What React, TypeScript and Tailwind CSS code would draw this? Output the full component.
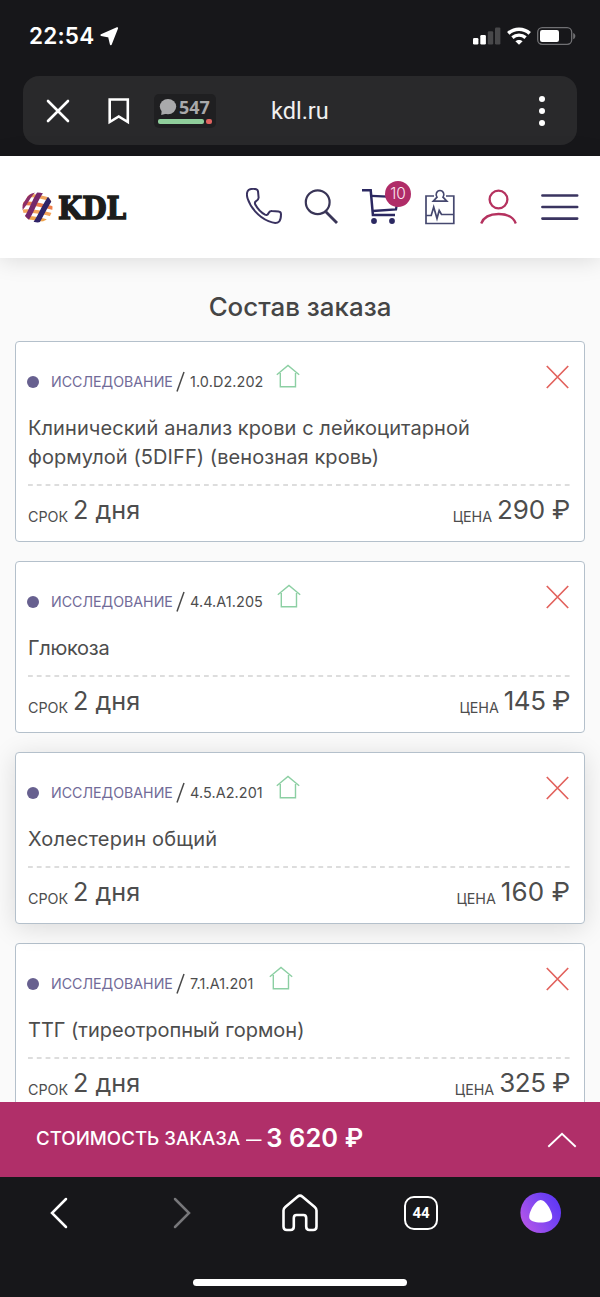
import React from "react";

type Study = {
  code: string;
  codeWidth: string;
  lines: string[];
  nameTracking: string;
  term: string;
  price: string;
  priceTracking: string;
  raised?: boolean;
};

const studies: Study[] = [
  {
    code: "1.0.D2.202",
    codeWidth: "w-[86px]",
    lines: ["Клинический анализ крови с лейкоцитарной", "формулой (5DIFF) (венозная кровь)"],
    nameTracking: "tracking-[0.08px]",
    term: "2 дня",
    price: "290 ₽",
    priceTracking: "tracking-[-0.2px]",
  },
  {
    code: "4.4.A1.205",
    codeWidth: "w-[87px]",
    lines: ["Глюкоза"],
    nameTracking: "tracking-[-0.3px]",
    term: "2 дня",
    price: "145 ₽",
    priceTracking: "tracking-[-0.5px]",
  },
  {
    code: "4.5.A2.201",
    codeWidth: "w-[86px]",
    lines: ["Холестерин общий"],
    nameTracking: "tracking-[0.2px]",
    term: "2 дня",
    price: "160 ₽",
    priceTracking: "tracking-[0.1px]",
    raised: true,
  },
  {
    code: "7.1.A1.201",
    codeWidth: "w-[79px]",
    lines: ["ТТГ (тиреотропный гормон)"],
    nameTracking: "tracking-[0px]",
    term: "2 дня",
    price: "325 ₽",
    priceTracking: "tracking-[-0.5px]",
  },
];

function StatusBar() {
  return (
    <div className="flex h-[76px] items-start justify-between pt-[23px] pr-[24px] pl-[29px] text-white">
      <div className="flex h-[26px] items-center">
        <span className="w-[66px] text-[22.5px] leading-[26px] font-semibold tracking-[0.2px] whitespace-nowrap">22:54</span>
        <svg width="19" height="19" viewBox="0 0 19 19" className="ml-[5px]">
          <path d="M17.2 1.2 1.3 8.1 9 9.7 10.8 17.3Z" fill="white" stroke="white" strokeWidth="1.8" strokeLinejoin="round" />
        </svg>
      </div>
      <div className="flex h-[26px] items-center">
        <svg width="28" height="18" viewBox="0 0 28 18">
          <rect x="0" y="11" width="5.4" height="6.5" rx="1.2" fill="white" />
          <rect x="7.3" y="8" width="5.6" height="9.5" rx="1.2" fill="white" />
          <rect x="14.8" y="4.2" width="5.4" height="13.3" rx="1.2" fill="#48484a" />
          <rect x="22" y="0.5" width="5.4" height="17" rx="1.2" fill="#48484a" />
        </svg>
        <svg width="24" height="18" viewBox="0 0 24 18" className="ml-[6px]" fill="none" stroke="white">
          <path d="M1.3 6.3C7.3.8 16.7.8 22.7 6.3" strokeWidth="3.6" />
          <path d="M5.4 10.6C9.2 7.3 14.8 7.3 18.6 10.6" strokeWidth="3.4" />
          <path d="M12 17.8 8.4 14.3C10.5 12.4 13.5 12.4 15.6 14.3Z" fill="white" stroke="none" />
        </svg>
        <svg width="39" height="18" viewBox="0 0 39 18" className="ml-[6px]">
          <rect x="0.7" y="0.7" width="34" height="16.6" rx="4.5" fill="none" stroke="#707073" strokeWidth="1.3" />
          <rect x="3" y="3" width="19" height="12" rx="2.2" fill="white" />
          <path d="M36.2 6V12.2C39 11.3 39 6.9 36.2 6Z" fill="#707073" />
        </svg>
      </div>
    </div>
  );
}

function AddressBar() {
  return (
    <div className="mx-[23px] flex h-[69px] items-center rounded-[16px] bg-[#29292b] text-white">
      <svg width="24" height="24" viewBox="0 0 24 24" className="ml-[23px]">
        <path d="M2 2 22 22M22 2 2 22" stroke="white" strokeWidth="2.6" strokeLinecap="round" />
      </svg>
      <svg width="22" height="28" viewBox="0 0 22 28" className="ml-[38px]">
        <path d="M1.7 2.5H19.8V25L10.75 19.5 1.7 25Z" fill="none" stroke="white" strokeWidth="2.6" />
      </svg>
      <div className="ml-[24px] flex h-[34px] w-[62px] flex-col rounded-[5px] bg-[#1f1f21] px-[4px] pt-[4px]">
        <div className="flex h-[19px] items-center">
          <svg width="18" height="18" viewBox="0 0 18 18" className="ml-[1px]">
            <ellipse cx="9" cy="8.6" rx="8.2" ry="7.7" fill="#a9a9ab" />
            <path d="M3 11 2.2 17 8 15.5Z" fill="#a9a9ab" />
          </svg>
          <span className="ml-[2px] font-['Noto_Sans',sans-serif] text-[18px] leading-[19px] font-bold text-[#a9a9ab]">547</span>
        </div>
        <div className="mt-[2px] flex gap-[2px]">
          <div className="h-[5px] w-[46px] rounded-[2px] bg-[#8fce9b]" />
          <div className="h-[5px] w-[6px] rounded-[2px] bg-[#e0635f]" />
        </div>
      </div>
      <span className="ml-[55px] w-[59px] font-['Roboto',sans-serif] text-[23.5px] leading-[28px] whitespace-nowrap text-[#f0f0f0]">kdl.ru</span>
      <div className="mr-[32px] ml-auto flex flex-col gap-[6px]">
        <div className="size-[6px] rounded-full bg-white" />
        <div className="size-[6px] rounded-full bg-white" />
        <div className="size-[6px] rounded-full bg-white" />
      </div>
    </div>
  );
}

function Logo() {
  return (
    <div className="flex h-[32px] items-center">
      <svg width="31" height="31" viewBox="0 0 31 31">
        <defs>
          <clipPath id="ball">
            <circle cx="15.5" cy="15.5" r="15" />
          </clipPath>
        </defs>
        <g clipPath="url(#ball)" fill="none">
          <path d="M-2 5C8 1 22 6 34 9" stroke="#f0a45d" strokeWidth="3.2" />
          <path d="M-2 12C8 10 20 13 34 17" stroke="#ef7d4a" strokeWidth="3.6" />
          <path d="M-2 19.5C8 18 20 20 34 24" stroke="#f4a45c" strokeWidth="3.6" />
          <path d="M-2 26C8 25 20 27 30 31" stroke="#f0a44c" strokeWidth="3.4" />
          <path d="M-1 17C4 12 6 5 12 -1" stroke="#8c2e68" strokeWidth="3.6" />
          <path d="M4 27C10 20 12 8 20 -2" stroke="#75276b" strokeWidth="5.4" />
          <path d="M12 34C19 25 22 14 30 4" stroke="#2f2367" strokeWidth="5.4" />
        </g>
      </svg>
      <span className="relative top-[1px] ml-[5px] w-[70px] origin-left scale-x-[0.86] font-['DejaVu_Serif',serif] text-[32.5px] leading-[32px] font-bold whitespace-nowrap text-[#1d1d1b] [-webkit-text-stroke:1.6px_#1d1d1b]">
        KDL
      </span>
    </div>
  );
}

function SiteHeader() {
  return (
    <header className="relative flex h-[102px] items-center bg-white pr-[21px] pl-[22px] shadow-[0_2px_22px_rgba(0,0,0,0.13)]">
      <Logo />
      <div className="ml-auto flex items-center">
        <svg width="36" height="36" viewBox="0 0 36 36" className="-mt-[2px]" fill="none" stroke="#393260" strokeWidth="2" strokeLinejoin="round">
          <path d="M2.8 1.8C5 .8 8 .7 10.300 1.200 11.200 1.400 11.800 2.200 12 3.200L12.600 9.500C12.700 11.300 11.500 12.300 9.800 13.400 8.700 14.200 8.700 15.300 9.300 16.500 11.400 20.500 15 24.400 19 26.600 20.600 27.400 21.700 26.800 22.300 25.500 23.200 23.500 24.200 22.900 26 23.100L32.500 23.600C34 23.800 35 24.600 35 26.200 35 28.500 34.700 31.500 33.300 33.300 31.500 35.300 27 35.100 22.500 33.200 12.500 29 4.500 19.500 1.600 10.500 .7 7.500.7 3.500 2.800 1.800Z" />
        </svg>
        <svg width="35" height="36" viewBox="0 0 35 36" className="ml-[22px]" fill="none" stroke="#393557">
          <circle cx="13.7" cy="13.2" r="11.9" strokeWidth="2.2" />
          <path d="M21.8 22.8 33 34" strokeWidth="2.8" />
        </svg>
        <div className="relative -mt-[2px] ml-[23px] h-[38px] w-[50px]">
          <svg width="38" height="38" viewBox="0 0 38 38" fill="none" stroke="#2b2861" strokeWidth="2.5">
            <path d="M0 3.200H8.700L10.900 28H33" />
            <path d="M9.400 8.800 36 10 34 22.500 10.500 24" strokeWidth="2.3" />
            <circle cx="12" cy="34" r="2.9" fill="#2b2861" stroke="none" />
            <circle cx="30" cy="34" r="2.9" fill="#2b2861" stroke="none" />
          </svg>
          <span className="absolute top-[-6px] left-[23px] flex size-[26px] items-center justify-center rounded-full bg-[#b02c68] text-[15.5px] font-light text-[#fbe6ef]">10</span>
        </div>
        <svg width="30" height="36" viewBox="0 0 30 36" className="ml-[13px]" fill="none" stroke="#45486f" strokeWidth="1.7">
          <path d="M9 7H1V34.500H28.800V7H21" />
          <path d="M8.300 12.200H21.800L18 8.200C19.900 5.800 18.500 1.500 15 1.500S10.100 5.800 12 8.200Z" />
          <path d="M1 26.500H6.200L8.700 18 12 29.500 14.200 21.500 16.500 25.500H28.800" />
        </svg>
        <svg width="37" height="36" viewBox="0 0 37 36" className="ml-[25px]" fill="none" stroke="#b5325f" strokeWidth="2.3">
          <circle cx="18.5" cy="10.5" r="8.9" />
          <path d="M1.200 34.500C3.500 28.500 10 25 18.500 25S33.500 28.500 35.800 34.500" />
        </svg>
        <svg width="38" height="28" viewBox="0 0 38 28" className="ml-[24px]" stroke="#3a3460" strokeWidth="2.6" strokeLinecap="round">
          <path d="M1.400 2.500H36.200M1.400 14H36.200M1.400 25.600H36.200" />
        </svg>
      </div>
    </header>
  );
}

function StudyCard({ study }: { study: Study }) {
  return (
    <article
      className={`rounded-[4px] border border-[#b4c0cb] bg-white px-[12px] text-[#4d4d4d] ${
        study.raised ? "relative shadow-[0_4px_26px_rgba(0,0,0,0.13)]" : ""
      }`}
    >
      <div className="flex h-[72px] items-start">
        <span className="mt-[34px] -ml-[1px] size-[12px] rounded-full bg-[#67608f]" />
        <span className="mt-[30px] ml-[12px] w-[123px] text-[14.2px] leading-[20px] whitespace-nowrap text-[#716b98]">ИССЛЕДОВАНИЕ</span>
        <svg width="10" height="22" viewBox="0 0 10 22" className="mt-[29px] ml-[2px]">
          <path d="M1 20.5 8 1" stroke="#4a4a4a" strokeWidth="1.5" />
        </svg>
        <span className={`mt-[30px] ml-[4px] text-[14.4px] leading-[20px] tracking-[0.1px] whitespace-nowrap ${study.codeWidth}`}>{study.code}</span>
        <svg width="24" height="24" viewBox="0 0 24 24" className="mt-[22px]" fill="none" stroke="#8ccfa3" strokeWidth="1.4">
          <path d="M.8 10.8 12 1.5 23.2 10.8M4.3 9V22.7H19.5V9" />
        </svg>
        <svg width="23" height="24" viewBox="0 0 23 24" className="mt-[23px] mr-[3px] ml-auto">
          <path d="M.8 1 22.2 23M22.2 1 .8 23" stroke="#e2625d" strokeWidth="1.7" />
        </svg>
      </div>
      <div className={`text-[20px] leading-[29px] ${study.nameTracking}`}>
        {study.lines.map((line) => (
          <p key={line} className="whitespace-nowrap">
            {line}
          </p>
        ))}
      </div>
      <svg width="544" height="2" className="mt-[12px] block">
        <path d="M0 1H544" stroke="#bcbcbc" strokeWidth="1.2" strokeDasharray="4.8 4" />
      </svg>
      <div className="flex h-[55px] items-start justify-between pt-[8px] pr-[2px]">
        <div className="flex items-baseline">
          <span className="relative top-[3px] w-[45px] text-[14.3px]">СРОК</span>
          <span className="text-[25.2px] leading-[32px] whitespace-nowrap">{study.term}</span>
        </div>
        <div className="flex items-baseline">
          <span className="relative top-[3px] mr-[5px] text-[14.3px] whitespace-nowrap">ЦЕНА</span>
          <span className={`text-[26px] leading-[32px] whitespace-nowrap ${study.priceTracking}`}>{study.price}</span>
        </div>
      </div>
    </article>
  );
}

function TotalBar() {
  return (
    <div className="relative flex h-[75px] shrink-0 items-center bg-[#b02f69] pr-[23px] pl-[36px] text-white">
      <span className="text-[18.7px] font-medium whitespace-nowrap">СТОИМОСТЬ ЗАКАЗА</span>
      <span className="ml-[6px] w-[20px] origin-left scale-x-[0.83] text-[18.6px]">—</span>
      <span className="-mt-[2px] text-[25.4px] font-semibold tracking-[0.1px] whitespace-nowrap">3 620 ₽</span>
      <svg width="30" height="16" viewBox="0 0 30 16" className="ml-auto" fill="none" stroke="white" strokeWidth="1.9">
        <path d="M1.3 14.7 15 1.8 28.7 14.7" />
      </svg>
    </div>
  );
}

function BottomNav() {
  return (
    <nav className="relative flex h-[120px] shrink-0 flex-col items-center bg-[#17171a]">
      <div className="flex h-[72px] w-full items-center">
        <svg width="20" height="32" viewBox="0 0 20 32" className="ml-[49px]" fill="none" stroke="white" strokeWidth="2.5" strokeLinecap="round">
          <path d="M17 2 3 16 17 30" />
        </svg>
        <svg width="20" height="32" viewBox="0 0 20 32" className="ml-[103px]" fill="none" stroke="#77777a" strokeWidth="2.5" strokeLinecap="round">
          <path d="M3 2 17 16 3 30" />
        </svg>
        <svg width="36" height="38" viewBox="0 0 36 38" className="ml-[90px]" fill="none" stroke="white" strokeWidth="2.6" strokeLinejoin="round">
          <path d="M1.5 16.5C1.5 14.8 2 14 3.3 12.9L15.5 2.7C17.3 1.2 18.7 1.2 20.5 2.7L32.7 12.9C34 14 34.5 14.8 34.5 16.5V32.5C34.5 34.8 33.5 36 31.2 36H27.5C25.2 36 24.2 34.8 24.2 32.5V24C24.2 22 23.3 21 21.5 21H14.5C12.7 21 11.8 22 11.8 24V32.5C11.8 34.8 10.8 36 8.5 36H4.8C2.5 36 1.5 34.8 1.5 32.5Z" />
        </svg>
        <div className="ml-[86px] flex size-[34px] items-center justify-center rounded-[10px] border-[2.5px] border-white font-['Roboto',sans-serif] text-[15px] font-bold text-white">44</div>
        <svg width="42" height="42" viewBox="0 0 42 42" className="ml-[82px]">
          <defs>
            <linearGradient id="assistant" x1="0" y1="0.8" x2="1" y2="0.2">
              <stop offset="0" stopColor="#b856e8" />
              <stop offset="0.6" stopColor="#7a45f2" />
              <stop offset="1" stopColor="#5b35f6" />
            </linearGradient>
          </defs>
          <circle cx="20.7" cy="20.7" r="20.3" fill="url(#assistant)" />
          <path d="M20.7 8C25.7 8 32.2 19 32.2 25 32.2 29 26.7 30.5 20.7 30.5S9.2 29 9.2 25C9.2 19 15.7 8 20.7 8Z" fill="white" />
        </svg>
      </div>
      <div className="mt-[30px] h-[7px] w-[214px] rounded-full bg-white" />
    </nav>
  );
}

export default function App() {
  return (
    <div className="flex h-[1297px] w-[600px] flex-col overflow-hidden bg-[#fafafa] font-['Inter',sans-serif]">
      <div className="h-[156px] shrink-0 bg-[#17171a]">
        <StatusBar />
        <AddressBar />
      </div>
      <SiteHeader />
      <main className="h-[844px] shrink-0 overflow-hidden px-[15px]">
        <h1 className="flex h-[82.5px] items-center justify-center pt-[16px] text-[25.9px] font-medium text-[#454545]">
          <span className="whitespace-nowrap">Состав заказа</span>
        </h1>
        <div className="flex flex-col gap-[19px]">
          {studies.map((study) => (
            <StudyCard key={study.code} study={study} />
          ))}
        </div>
      </main>
      <TotalBar />
      <BottomNav />
    </div>
  );
}
